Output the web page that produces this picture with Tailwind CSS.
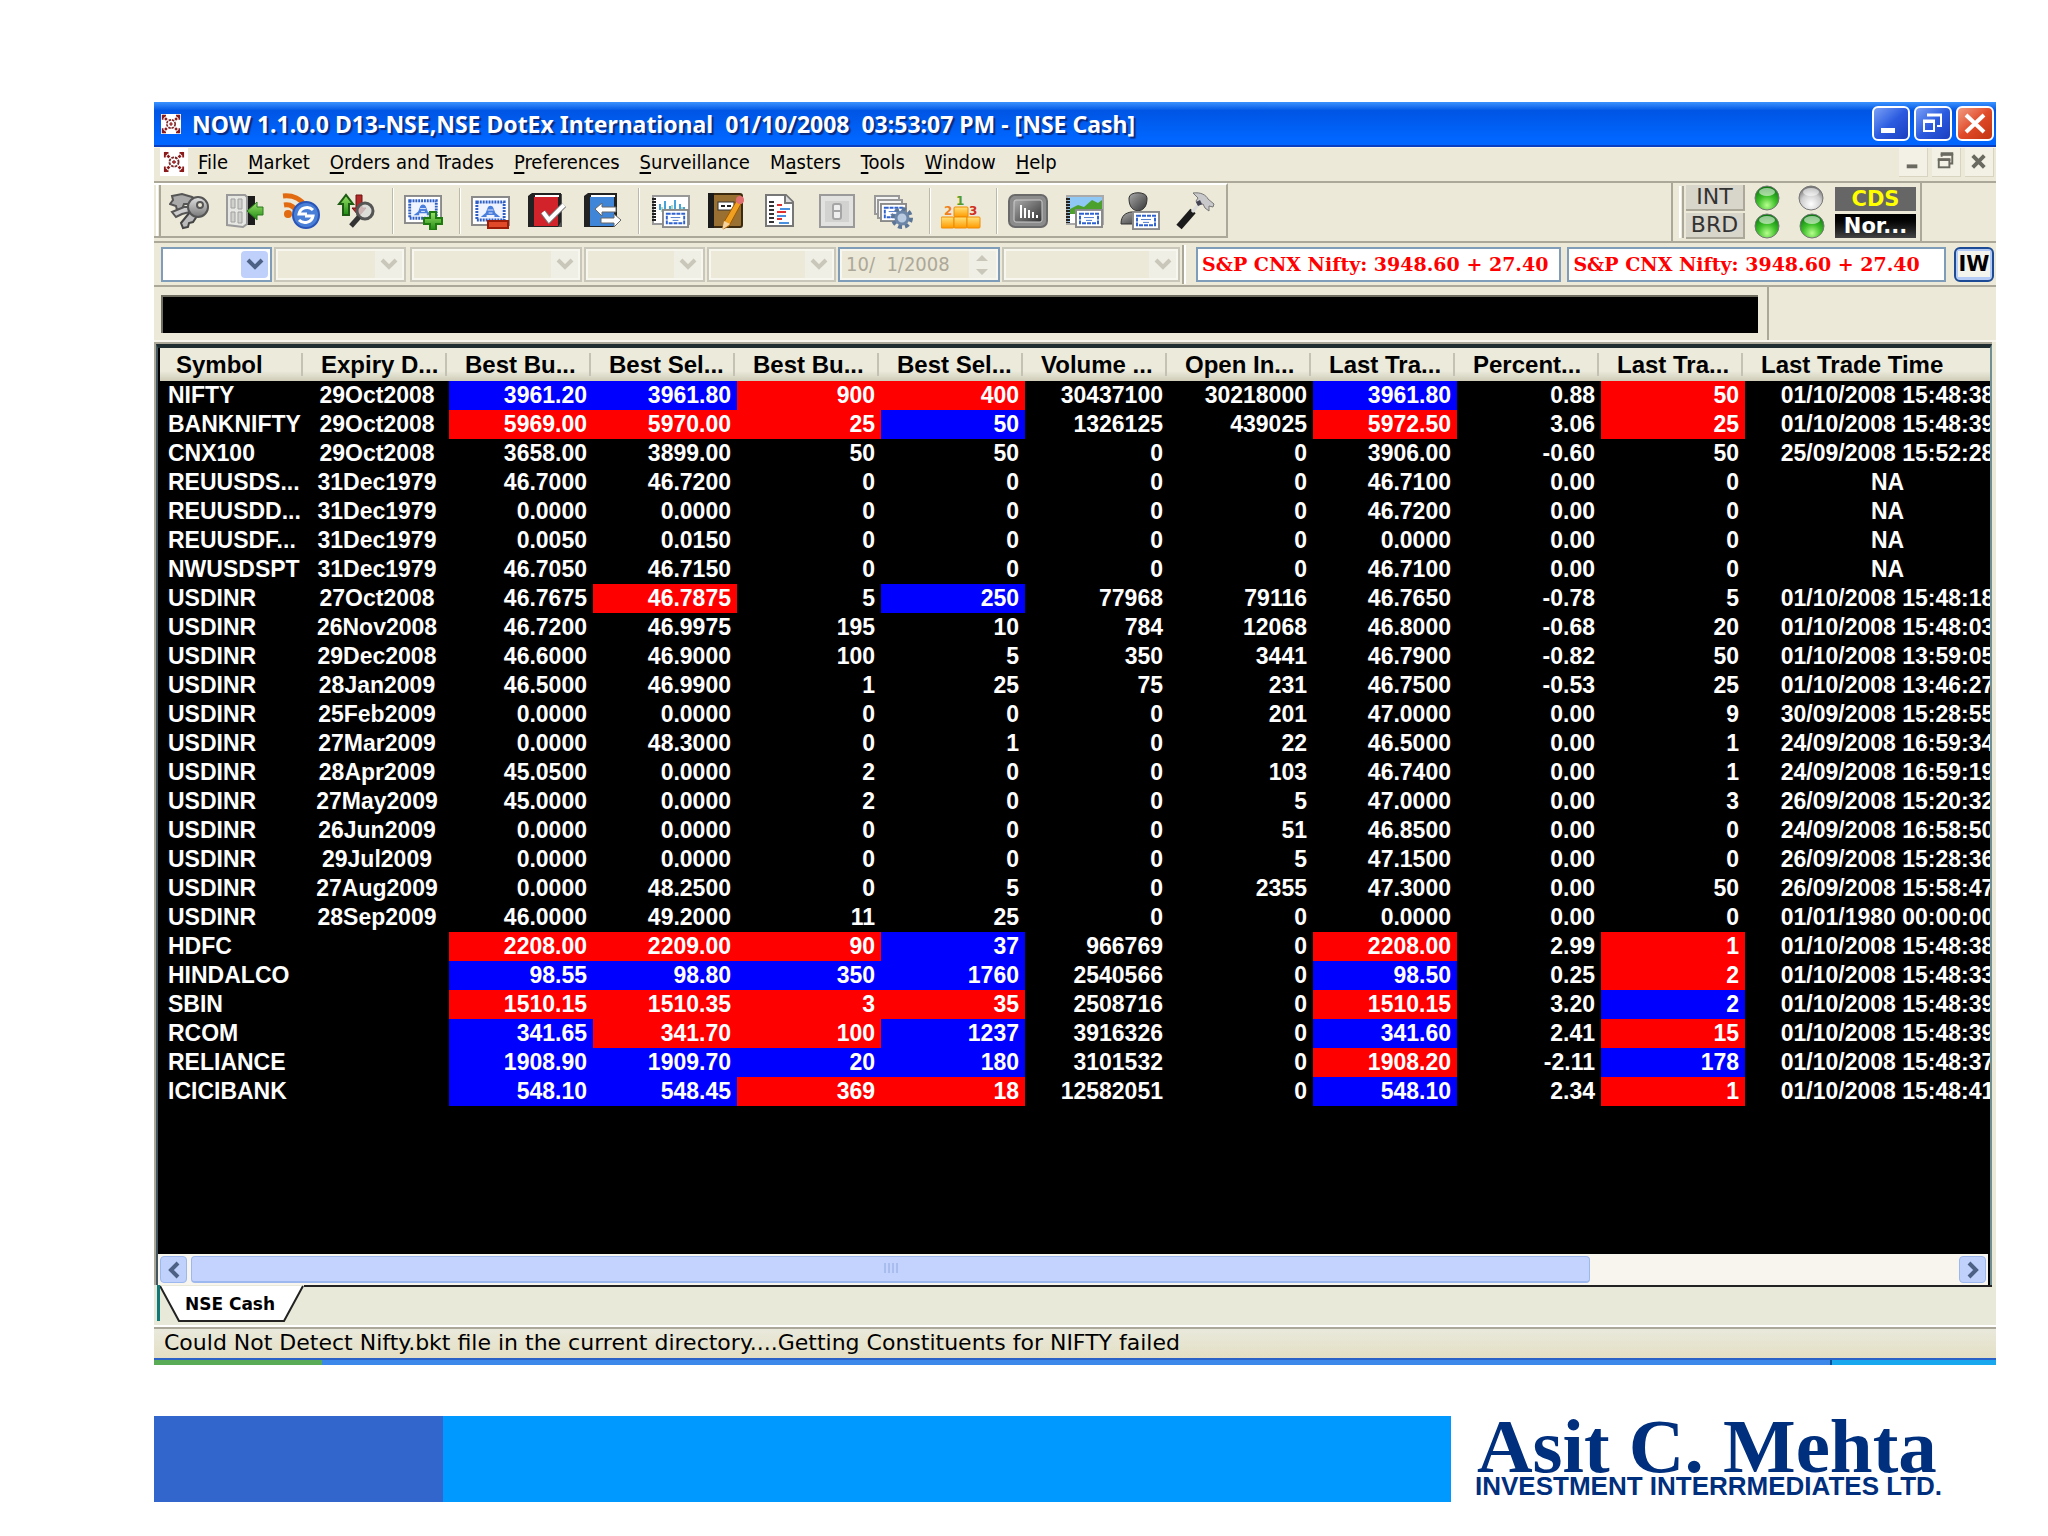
<!DOCTYPE html>
<html lang="en">

<head>
    <meta charset="UTF-8">
    <meta name="viewport" content="width=device-width, initial-scale=1.0">
    <title>NOW 1.1.0.0 - NSE Cash</title>
    <script src="https://cdn.jsdelivr.net/npm/@tailwindcss/browser@4"></script>
</head>

<body class="bg-white min-h-screen">
    <!-- shared icon parts -->
    <svg class="absolute w-0 h-0">
        <defs>
            <linearGradient id="gOrange" x1="0" y1="0" x2="0" y2="1"><stop offset="0" stop-color="#ffe27a"/><stop offset="1" stop-color="#ff9a00"/></linearGradient>
            <linearGradient id="gGreen" x1="0" y1="0" x2="0" y2="1"><stop offset="0" stop-color="#9be36a"/><stop offset="1" stop-color="#1f8a12"/></linearGradient>
            <linearGradient id="gGray" x1="0" y1="0" x2="0" y2="1"><stop offset="0" stop-color="#e4e4e4"/><stop offset="1" stop-color="#777"/></linearGradient>
            <linearGradient id="gDark" x1="0" y1="0" x2="1" y2="1"><stop offset="0" stop-color="#aaa"/><stop offset="1" stop-color="#333"/></linearGradient>
            <radialGradient id="ledGreen" cx=".5" cy=".8" r=".75"><stop offset="0" stop-color="#b6ff8e"/><stop offset=".5" stop-color="#3fc02a"/><stop offset="1" stop-color="#0c7a10"/></radialGradient>
            <radialGradient id="ledGray" cx=".5" cy=".75" r=".7"><stop offset="0" stop-color="#fff"/><stop offset=".6" stop-color="#cfcfcf"/><stop offset="1" stop-color="#777"/></radialGradient>
            <symbol id="cert" viewBox="0 0 40 30" preserveAspectRatio="none">
                <rect x="1" y="1" width="38" height="28" fill="#fff" stroke="#8a8a8a" stroke-width="2"/>
                <rect x="6" y="6" width="28" height="18" fill="#eef3ff" stroke="#2f5fc4" stroke-width="3" stroke-dasharray="2 1"/>
                <path d="M10 21l5-4 2-5c1-3 5-3 6 0l2 5 5 4h-6v-2h-8v2z" fill="#4a7edc"/>
                <path d="M17 14h6M18 17h4" stroke="#dfe9ff" stroke-width="1"/>
            </symbol>
            <symbol id="certSmall" viewBox="0 0 28 20" preserveAspectRatio="none">
                <rect x="1" y="1" width="26" height="18" fill="#fff" stroke="#8a8a8a" stroke-width="2"/>
                <rect x="5" y="5" width="18" height="10" fill="none" stroke="#2f62cf" stroke-width="2" stroke-dasharray="4 1"/>
                <path d="M9 9h10M11 12h6" stroke="#4a78c8" stroke-width="1"/>
            </symbol>
            <symbol id="chev" viewBox="0 0 18 12"><path d="M2 2l7 7 7-7" fill="none" stroke="currentColor" stroke-width="4"/></symbol>
            <symbol id="appIcon" viewBox="0 0 24 24">
                <rect width="24" height="24" fill="#fff"/>
                <path d="M2 2l5 5M22 2l-5 5M2 22l5-5M22 22l-5-5" stroke="#8b1a1a" stroke-width="3" stroke-dasharray="3 1"/>
                <path d="M2 7V2h4M18 2h4v5M2 17v5h4M18 22h4v-5" fill="none" stroke="#8b1a1a" stroke-width="2"/>
                <circle cx="12" cy="12" r="5" fill="none" stroke="#7a2a2a" stroke-width="2" stroke-dasharray="3 1"/>
                <path d="M10 12h4M12 10v4" stroke="#a03030" stroke-width="2"/>
            </symbol>
        </defs>
    </svg>

    <main class="mt-[102px] ml-[154px] mr-[52px] bg-[#ece9d8]">
        <!-- title bar -->
        <header class="flex items-center h-[45px] pl-1.5 pr-0.5 bg-linear-to-b from-[#3b93ff] from-0% via-[#0055e4] via-20% to-[#0066ff] to-85% border-b-2 border-[#0a3fc0]">
            <svg class="w-[22px] h-[20px]"><use href="#appIcon"/></svg>
            <h1 class="flex-1 pl-2.5 font-['Noto_Sans',sans-serif] font-bold text-[23px] leading-8 text-white whitespace-pre [text-shadow:2px_2px_1px_#0a2a80]">NOW 1.1.0.0 D13-NSE,NSE DotEx International  01/10/2008  03:53:07 PM - [NSE Cash]</h1>
            <div class="flex gap-1">
                <button aria-label="Minimize" class="w-[38px] h-[35px] rounded-md border-2 border-white bg-linear-to-br from-[#7b9ff5] via-[#2c5be0] to-[#1c3fc0]">
                    <svg class="w-full h-full" viewBox="0 0 34 31"><rect x="7" y="20" width="14" height="5" fill="#fff"/></svg>
                </button>
                <button aria-label="Restore" class="w-[38px] h-[35px] rounded-md border-2 border-white bg-linear-to-br from-[#7b9ff5] via-[#2c5be0] to-[#1c3fc0]">
                    <svg class="w-full h-full" viewBox="0 0 34 31" fill="none" stroke="#fff"><path d="M12 8V7h13v11h-4" stroke-width="2"/><path d="M11 7h15" stroke-width="3"/><rect x="8" y="14" width="10" height="9" stroke-width="2"/><path d="M7 13h12" stroke-width="3"/></svg>
                </button>
                <button aria-label="Close" class="w-[38px] h-[35px] rounded-md border-2 border-white bg-linear-to-br from-[#f09a80] via-[#e04a28] to-[#c23410]">
                    <svg class="w-full h-full" viewBox="0 0 34 31"><path d="M8 7l18 17M26 7L8 24" stroke="#fff" stroke-width="4"/></svg>
                </button>
            </div>
        </header>

        <!-- menu bar -->
        <nav class="flex items-start h-[34px] pl-1.5 pr-0.5 bg-[#ece9d8] border-t border-[#f8f6ec] font-['DejaVu_Sans_Condensed','DejaVu_Sans',sans-serif] [font-stretch:condensed] text-[20px] leading-7 text-black">
            <span class="flex w-7 h-7 items-center justify-center bg-white"><svg class="w-[22px] h-[22px]"><use href="#appIcon"/></svg></span>
            <div class="flex gap-5 flex-1 pl-2.5 underline-offset-3">
                <a href="#"><u>F</u>ile</a>
                <a href="#"><u>M</u>arket</a>
                <a href="#"><u>O</u>rders and Trades</a>
                <a href="#"><u>P</u>references</a>
                <a href="#"><u>S</u>urveillance</a>
                <a href="#">M<u>a</u>sters</a>
                <a href="#"><u>T</u>ools</a>
                <a href="#"><u>W</u>indow</a>
                <a href="#"><u>H</u>elp</a>
            </div>
            <div class="flex gap-1">
                <button aria-label="Minimize document" class="w-[29px] h-[29px] bg-[#f3f1e6] border-r border-b border-[#d8d4c0]"><svg class="w-full h-full" viewBox="0 0 29 29"><rect x="8" y="17" width="11" height="4" fill="#6b6a60"/></svg></button>
                <button aria-label="Restore document" class="w-[29px] h-[29px] bg-[#f3f1e6] border-r border-b border-[#d8d4c0]"><svg class="w-full h-full" viewBox="0 0 29 29" fill="none" stroke="#6b6a60" stroke-width="2"><path d="M10 9V7h11v9h-3"/><path d="M9 6h13M6 12h13" stroke-width="3"/><rect x="7" y="12" width="11" height="8"/></svg></button>
                <button aria-label="Close document" class="w-[29px] h-[29px] bg-[#f3f1e6] border-r border-b border-[#d8d4c0]"><svg class="w-full h-full" viewBox="0 0 29 29"><path d="M8 8l12 12M20 8L8 20" stroke="#6b6a60" stroke-width="4"/></svg></button>
            </div>
        </nav>

        <!-- icon toolbar -->
        <section class="flex h-[62px] border-y-2 border-[#aca899] bg-[#ece9d8]">
            <div class="flex items-center h-[55px] w-[1074px] pl-0.5 border-t-2 border-white border-r-2 border-b-2 border-r-[#aca899] border-b-[#aca899]">
                <span class="w-[5px] h-full border-x-2 border-l-white border-r-[#aca899]"></span>
                <button aria-label="Login" class="w-14 px-2"><svg class="w-10 h-[38px]" viewBox="0 0 40 38"><path d="M3 4l10-2 10 3 5 3-5 4-8 0-2 5-5 1-1-4-6-2 3-4z" fill="#aaa" stroke="#555" stroke-width="2"/><path d="M3 20l12-5 9 0-3 5-8 2-6 3z" fill="#ccc" stroke="#555" stroke-width="2"/><path d="M21 20l-9 11 2 5 5-1 1-4 4-1 4-6z" fill="#bbb" stroke="#444" stroke-width="2"/><circle cx="29" cy="15" r="10" fill="url(#gGray)" stroke="#555" stroke-width="2"/><circle cx="31" cy="13" r="3" fill="#ece9d8" stroke="#555" stroke-width="2"/></svg></button>
                <button aria-label="Logout" class="w-14 px-2"><svg class="w-10 h-[38px]" viewBox="0 0 40 38"><rect x="19" y="4" width="11" height="29" fill="#1c1c1c"/><path d="M2 3h18l2 2v27l-4 3-16-2z" fill="#e6e6e2" stroke="#9a9a9a" stroke-width="2"/><path d="M6 7h4v9H6zM13 7h4v10h-4zM6 20h4v10H6zM13 20h4v11h-4z" fill="#d0d0cc" stroke="#a0a0a0"/><path d="M38 15h-6v-5L22 19l10 9v-5h6z" fill="url(#gGreen)" stroke="#2b7a1e" stroke-width="1"/></svg></button>
                <button aria-label="Feed" class="w-14 px-2"><svg class="w-10 h-[38px]" viewBox="0 0 40 38" fill="none"><path d="M2 4c10-1 18 3 22 10" stroke="#e26a10" stroke-width="5"/><path d="M3 13c6-1 10 1 13 7" stroke="#e26a10" stroke-width="5"/><circle cx="7" cy="22" r="4" fill="#e26a10"/><circle cx="25" cy="23" r="13" fill="#4a7fd8" stroke="#2a55b8" stroke-width="2"/><path d="M32 18c-5-5-13-2-14 4h8M18 28c5 5 13 2 14-4h-8" stroke="#fff" stroke-width="3"/></svg></button>
                <button aria-label="Market watch search" class="w-14 px-2"><svg class="w-10 h-[38px]" viewBox="0 0 40 38"><path d="M6 23V12H2L9 3l7 9h-4v11z" fill="url(#gGreen)" stroke="#1d5c12" stroke-width="2"/><path d="M19 3h6v13h4l-7 8-7-8h4z" fill="#b02a2a" stroke="#701010" stroke-width="1"/><circle cx="28" cy="19" r="8" fill="#d8d8d8" fill-opacity=".8" stroke="#555" stroke-width="3"/><path d="M22 25l-8 9" stroke="#333" stroke-width="5"/></svg></button>
                <span class="w-[2px] h-[46px] ml-[7px] mr-[2px] bg-[#bdb9a8] border-r border-white"></span>
                <button aria-label="Add order" class="w-14 px-2"><svg class="w-10 h-[38px]" viewBox="0 0 40 38"><use href="#cert" x="0" y="3" width="38" height="29"/><path d="M26 20h6v6h6v6h-6v6h-6v-6h-6v-6h6z" fill="url(#gGreen)" stroke="#1f7a10" stroke-width="2"/></svg></button>
                <span class="w-[2px] h-[46px] ml-[7px] mr-[2px] bg-[#bdb9a8] border-r border-white"></span>
                <button aria-label="Remove order" class="w-14 px-2"><svg class="w-10 h-[38px]" viewBox="0 0 40 38"><use href="#cert" x="0" y="4" width="39" height="30"/><rect x="17" y="29" width="20" height="7" fill="#e04a28" stroke="#9c1c08" stroke-width="2"/></svg></button>
                <button aria-label="Order book" class="w-14 px-2"><svg class="w-10 h-[38px]" viewBox="0 0 40 38"><path d="M3 2h32v33H3z" fill="#555"/><path d="M1 4l4-3h29v29l-3 5H1z" fill="#222"/><rect x="7" y="5" width="24" height="29" fill="#d2232a"/><path d="M8 4h24" stroke="#fff" stroke-width="2"/><path d="M16 20l6 8 15-15" fill="none" stroke="#777" stroke-width="6"/><path d="M16 20l6 8 15-15" fill="none" stroke="#fff" stroke-width="4"/></svg></button>
                <button aria-label="Trade book" class="w-14 px-2"><svg class="w-10 h-[38px]" viewBox="0 0 40 38"><path d="M1 4l4-3h29v29l-3 5H1z" fill="#222"/><rect x="7" y="5" width="24" height="29" fill="#3f86d8"/><path d="M8 4h24" stroke="#fff" stroke-width="2"/><path d="M12 17l7-6v4h14v5H19v4zM38 28l-7-6v4H18v5h13v4z" fill="#fff" stroke="#666" stroke-width="1"/></svg></button>
                <span class="w-[2px] h-[46px] ml-[7px] mr-[2px] bg-[#bdb9a8] border-r border-white"></span>
                <button aria-label="Market picture" class="w-14 px-2"><svg class="w-10 h-[38px]" viewBox="0 0 40 38"><rect x="3" y="4" width="36" height="28" fill="#fff" stroke="#999" stroke-width="2"/><path d="M4 6v23" stroke="#222" stroke-width="4" stroke-dasharray="2 1"/><path d="M10 18v-6M15 18V9M20 18v-4M25 18V8M30 18v-6M34 18v-3" stroke="#4aa3d8" stroke-width="2"/><path d="M12 20v-5M22 20v-7M32 20v-5" stroke="#5bbf8a" stroke-width="1"/><use href="#certSmall" x="12" y="17" width="27" height="19"/></svg></button>
                <button aria-label="Edit notes" class="w-14 px-2"><svg class="w-10 h-[38px]" viewBox="0 0 40 38"><rect x="4" y="2" width="32" height="33" rx="2" fill="#9a6f32" stroke="#3c2a10" stroke-width="2"/><path d="M5 1v35" stroke="#1b1b1b" stroke-width="6"/><rect x="12" y="10" width="16" height="8" fill="#fff" stroke="#333"/><path d="M15 14h10" stroke="#222" stroke-width="2" stroke-dasharray="4 2"/><path d="M31 8l5 2-13 24-6 3 1-7z" fill="#f0a020" stroke="#a05a00" stroke-width="1"/><circle cx="34" cy="8" r="4" fill="#e07070"/><path d="M18 29l6 3-8 6z" fill="#f5d3a0"/></svg></button>
                <button aria-label="Report" class="w-14 px-2"><svg class="w-10 h-[38px]" viewBox="0 0 40 38"><path d="M4 3h20l7 7v24H4z" fill="#fff" stroke="#777" stroke-width="2"/><path d="M23 3v8h8" fill="#ddd" stroke="#777" stroke-width="2"/><path d="M7 10h5M7 14h5M7 18h5M7 22h5M7 26h5M7 30h5" stroke="#333" stroke-width="2"/><path d="M15 13h5M15 20h9M15 27h5" stroke="#e03030" stroke-width="2"/><path d="M18 17h10M15 24h9M17 31h10" stroke="#4a90e0" stroke-width="2"/></svg></button>
                <button aria-label="Switch" class="w-14 px-2"><svg class="w-10 h-[38px]" viewBox="0 0 40 38"><rect x="2" y="3" width="34" height="32" fill="#e2e2e0" stroke="#9a9a9a" stroke-width="2"/><rect x="7" y="9" width="24" height="21" fill="#d2d2d0"/><rect x="15" y="12" width="8" height="15" rx="2" fill="#eee" stroke="#a5a5a5" stroke-width="2"/><path d="M15 19h8" stroke="#a5a5a5" stroke-width="2"/></svg></button>
                <button aria-label="Order settings" class="w-14 px-2"><svg class="w-10 h-[38px]" viewBox="0 0 40 38"><path d="M1 4h24v18H1z" fill="#f4f4f4" stroke="#999" stroke-width="2"/><path d="M4 8h24v18H4z" fill="#f4f4f4" stroke="#999" stroke-width="2"/><use href="#certSmall" x="6" y="11" width="27" height="19"/><circle cx="28" cy="26" r="9" fill="none" stroke="#5c7698" stroke-width="4" stroke-dasharray="4 3"/><circle cx="28" cy="26" r="6" fill="#b9cbe0" stroke="#6c86a8" stroke-width="3"/></svg></button>
                <span class="w-[2px] h-[46px] ml-[7px] mr-[2px] bg-[#bdb9a8] border-r border-white"></span>
                <button aria-label="Rankings" class="w-14 px-2"><svg class="w-10 h-[38px]" viewBox="0 0 40 38"><g fill="url(#gOrange)" stroke="#f08a00" stroke-width="1"><rect x="13" y="15" width="14" height="10" rx="1"/><rect x="0" y="25" width="13" height="11" rx="1"/><rect x="13" y="25" width="13" height="11" rx="1"/><rect x="26" y="25" width="13" height="11" rx="1"/></g><g font-family="DejaVu Sans" font-weight="bold" font-size="12"><text x="15" y="13" fill="#5a9a20">1</text><text x="3" y="23" fill="#f08020">2</text><text x="28" y="23" fill="#d03020">3</text></g></svg></button>
                <span class="w-[2px] h-[46px] ml-[7px] mr-[2px] bg-[#bdb9a8] border-r border-white"></span>
                <button aria-label="Index graph" class="w-14 px-2"><svg class="w-10 h-[38px]" viewBox="0 0 40 38"><rect x="1" y="3" width="38" height="32" rx="6" fill="#8c8c8c" stroke="#6a6a6a" stroke-width="2"/><rect x="6" y="8" width="28" height="22" rx="2" fill="url(#gDark)" stroke="#ccc" stroke-width="1"/><path d="M13 26V13M17 26V16M21 26V18M25 26v-6M29 26v-3" stroke="#fff" stroke-width="2"/></svg></button>
                <button aria-label="Chart" class="w-14 px-2"><svg class="w-10 h-[38px]" viewBox="0 0 40 38"><rect x="3" y="4" width="36" height="28" fill="#8fc8f5" stroke="#aaa" stroke-width="2"/><path d="M6 17l8-4 6 2 8-7 6 3 4-3v14H6z" fill="#4ca02c"/><path d="M6 22h12v9H6z" fill="#fff"/><path d="M4 6v25" stroke="#222" stroke-width="4" stroke-dasharray="2 1"/><use href="#certSmall" x="11" y="17" width="28" height="19"/></svg></button>
                <button aria-label="Client orders" class="w-14 px-2"><svg class="w-10 h-[38px]" viewBox="0 0 40 38"><path d="M1 32c0-9 5-11 10-12h14v12z" fill="url(#gDark)" stroke="#333"/><path d="M9 6c0-7 18-7 18 0 0 5-1 12-9 13-8-1-9-8-9-13z" fill="url(#gDark)" stroke="#333"/><use href="#certSmall" x="12" y="19" width="28" height="19"/></svg></button>
                <button aria-label="Tools" class="w-14 px-2"><svg class="w-10 h-[38px]" viewBox="0 0 40 38"><path d="M3 35l14-16" stroke="#1b1b1b" stroke-width="7"/><path d="M16 20l8-9" stroke="#ddd" stroke-width="3"/><path d="M17 1c8-1 13 2 15 6l6 5-1 3-4-1 0 5-4-3-2-4-5 1-2-4 2-3z" fill="#c9c9cc" stroke="#777" stroke-width="1"/><path d="M20 10l4-2 2 4-4 2z" fill="#445"/></svg></button>
            </div>
            <div class="flex-1"></div>
            <div class="flex items-center w-[251px] border-x-2 border-x-[#aca899]">
                <span class="w-[5px] h-[52px] ml-1.5 border-x-2 border-l-white border-r-[#aca899]"></span>
                <div class="ml-0.5 flex flex-col gap-[2px] w-[59px] font-['DejaVu_Sans',sans-serif] text-[22px] leading-6 text-center text-[#333]">
                    <span class="h-[26px] bg-[#d8d5cb] border-r-2 border-b-2 border-[#aca899]">INT</span>
                    <span class="h-[26px] bg-[#d8d5cb] border-r-2 border-b-2 border-[#aca899]">BRD</span>
                </div>
                <svg class="w-[90px] h-[54px]" viewBox="0 0 90 54" stroke-width="1">
                    <g stroke="#777"><circle cx="22" cy="13" r="12" fill="url(#ledGreen)"/><circle cx="66" cy="13" r="12" fill="url(#ledGray)"/><circle cx="22" cy="41" r="12" fill="url(#ledGreen)"/><circle cx="67" cy="41" r="12" fill="url(#ledGreen)"/></g>
                    <g fill="#fff" fill-opacity=".55"><ellipse cx="22" cy="7" rx="8" ry="4"/><ellipse cx="66" cy="7" rx="8" ry="4"/><ellipse cx="22" cy="35" rx="8" ry="4"/><ellipse cx="67" cy="35" rx="8" ry="4"/></g>
                </svg>
                <div class="flex flex-col gap-[3px] w-[81px] font-['DejaVu_Sans',sans-serif] font-bold text-[21px] leading-6 text-center">
                    <span class="bg-[#666] text-[#ffff00]">CDS</span>
                    <span class="bg-linear-to-b from-black to-[#444] text-white">Nor...</span>
                </div>
            </div>
            <div class="w-[74px]"></div>
        </section>

        <!-- order filter bar -->
        <section class="flex items-center h-[44px] pl-[7px] pr-0.5 border-b-2 border-[#aca899] font-['DejaVu_Sans_Condensed','DejaVu_Sans',sans-serif]">
            <div class="flex h-[35px] w-[111px] p-[2px] border-2 border-[#7f9db9] bg-white">
                <select aria-label="Exchange" class="flex-1 min-w-0 appearance-none bg-white"></select>
                <span class="flex items-center justify-center w-[27px] bg-[#bfd0fb] rounded-sm text-[#4d6185]"><svg class="w-[18px] h-3"><use href="#chev"/></svg></span>
            </div>
            <div class="flex h-[35px] w-[132px] ml-0.5 p-[2px] border-2 border-[#c9c7ba] bg-[#f7f6ef]">
                <select aria-label="Instrument" disabled class="flex-1 min-w-0 appearance-none bg-[#ece9d8]"></select>
                <span class="flex items-center justify-center w-[27px] bg-[#f0efe6] text-[#c9c7ba]"><svg class="w-[18px] h-3"><use href="#chev"/></svg></span>
            </div>
            <div class="flex h-[35px] w-[172px] ml-1 p-[2px] border-2 border-[#c9c7ba] bg-[#f7f6ef]">
                <select aria-label="Symbol" disabled class="flex-1 min-w-0 appearance-none bg-[#ece9d8]"></select>
                <span class="flex items-center justify-center w-[27px] bg-[#f0efe6] text-[#c9c7ba]"><svg class="w-[18px] h-3"><use href="#chev"/></svg></span>
            </div>
            <div class="flex h-[35px] w-[121px] ml-0.5 p-[2px] border-2 border-[#c9c7ba] bg-[#f7f6ef]">
                <select aria-label="Series" disabled class="flex-1 min-w-0 appearance-none bg-[#ece9d8]"></select>
                <span class="flex items-center justify-center w-[27px] bg-[#f0efe6] text-[#c9c7ba]"><svg class="w-[18px] h-3"><use href="#chev"/></svg></span>
            </div>
            <div class="flex h-[35px] w-[129px] ml-0.5 p-[2px] border-2 border-[#c9c7ba] bg-[#f7f6ef]">
                <select aria-label="Option type" disabled class="flex-1 min-w-0 appearance-none bg-[#ece9d8]"></select>
                <span class="flex items-center justify-center w-[27px] bg-[#f0efe6] text-[#c9c7ba]"><svg class="w-[18px] h-3"><use href="#chev"/></svg></span>
            </div>
            <div class="flex h-[35px] w-[162px] ml-0.5 p-[2px] border-2 border-[#7f9db9] bg-[#f7f6ef]">
                <input aria-label="Expiry date" type="text" disabled value="10/  1/2008" class="flex-1 min-w-0 pl-1 whitespace-pre bg-[#ece9d8] text-[20px] [font-stretch:condensed] text-[#aca899]">
                <svg class="w-[27px] h-full bg-[#f0efe6]" viewBox="0 0 27 27" fill="#c9c7ba"><path d="M7 10l6-6 6 6zM7 18l6 6 6-6z"/></svg>
            </div>
            <div class="flex h-[35px] w-[178px] ml-0.5 p-[2px] border-2 border-[#c9c7ba] bg-[#f7f6ef]">
                <select aria-label="Strike price" disabled class="flex-1 min-w-0 appearance-none bg-[#ece9d8]"></select>
                <span class="flex items-center justify-center w-[27px] bg-[#f0efe6] text-[#c9c7ba]"><svg class="w-[18px] h-3"><use href="#chev"/></svg></span>
            </div>
            <span class="w-1 h-[39px] mx-0.5 border-l-2 border-r-2 border-l-[#aca899] border-r-white"></span>
            <div class="flex flex-1 gap-1.5 ml-2 mr-2 font-['DejaVu_Serif',serif] font-bold text-[19px] leading-[30px] text-[#ff0000]">
                <p class="flex-[27] h-[35px] pl-1 bg-white border-2 border-[#7f9db9] whitespace-nowrap">S&amp;P CNX Nifty: 3948.60 + 27.40</p>
                <p class="flex-[28] h-[35px] pl-1 bg-white border-2 border-[#7f9db9] whitespace-nowrap">S&amp;P CNX Nifty: 3948.60 + 27.40</p>
            </div>
            <button class="w-10 h-[35px] rounded-md border-2 border-[#1c4a94] bg-[#b4ccf5] p-0.5 font-['DejaVu_Sans',sans-serif] font-bold text-[21px] leading-[26px] text-black"><span class="flex justify-center bg-[#f4f4ee]">IW</span></button>
        </section>

        <!-- message bar -->
        <section class="flex h-[55px] border-b-2 border-[#f8f6ec]">
            <div class="flex-1 mt-2 mb-[7px] ml-[7px] mr-[9px] bg-black border-t-2 border-l-2 border-[#6f6e60]"></div>
            <div class="w-[229px] border-l-2 border-[#aca899]"></div>
        </section>

        <!-- market watch grid -->
        <section class="mr-[4px] border-t-2 border-l-2 border-[#aca899]">
            <div class="border-t-4 border-x-2 border-t-[#1f2c30] border-l-[#44565f] border-r-[#6f8f93] bg-black">
                <div class="overflow-hidden pb-[148px] ml-[2px]">
                    <table class="table-fixed w-[1870px] border-collapse font-['Liberation_Sans',Arial,sans-serif] font-bold text-[23px] leading-[29px] text-white whitespace-nowrap">
                        <thead><tr id="head"></tr></thead>
                        <tbody id="rows"></tbody>
                    </table>
                </div>
                <div class="flex h-[31px] mr-0.5 p-[2px] gap-1 bg-[#f7f5ee]">
                    <button aria-label="Scroll left" class="flex items-center justify-center w-[27px] rounded-sm bg-[#c0d1fc] border border-[#9db8ee] text-[#4d6185]"><svg class="w-[18px] h-3 rotate-90"><use href="#chev"/></svg></button>
                    <div class="flex flex-1">
                        <div class="flex flex-[23] items-center justify-center rounded-sm bg-[#c3d3fd] border border-b-2 border-[#9db8ee]">
                            <svg class="w-4 h-3"><path d="M2 0v10M6 0v10M10 0v10M14 0v10" stroke="#8ea8e0" stroke-width="1"/></svg>
                        </div>
                        <div class="flex-[6]"></div>
                    </div>
                    <button aria-label="Scroll right" class="flex items-center justify-center w-[27px] rounded-sm bg-[#c0d1fc] border border-[#9db8ee] text-[#4d6185]"><svg class="w-[18px] h-3 -rotate-90"><use href="#chev"/></svg></button>
                </div>
            </div>
        </section>

        <!-- sheet tabs -->
        <section class="flex h-[42px] bg-[#e9e9d9] border-b-2 border-white">
            <span class="w-[3px] ml-[3px] mb-1 bg-[#117a78]"></span>
            <button class="relative w-[144px] h-[37px] pr-1 font-['DejaVu_Sans',sans-serif] font-bold text-[17px] leading-9 text-black">
                <svg class="absolute inset-0 w-full h-full" viewBox="0 0 144 37"><path d="M0 1l19 35h105l19-35" fill="#fff" stroke="#222" stroke-width="2"/></svg>
                <span class="relative">NSE Cash</span>
            </button>
            <span class="flex-1 mr-1 border-t-2 border-[#222]"></span>
        </section>

        <!-- status bar -->
        <footer class="h-[31px] pl-2.5 border-t-2 border-[#aca899] bg-linear-to-b from-[#e9e9dc] to-[#e4dfc4] font-['DejaVu_Sans',sans-serif] text-[22px] leading-7 text-black whitespace-nowrap">Could Not Detect Nifty.bkt file in the current directory....Getting Constituents for NIFTY failed</footer>
        <div class="flex h-[7px] bg-[#3c87ea] border-t-2 border-[#2a62c8]">
            <span class="w-[168px] bg-[#5aab55]"></span>
            <span class="flex-1"></span>
            <span class="w-[166px] bg-[#19a8ee] border-l-2 border-[#0d4f96]"></span>
        </div>
    </main>

    <!-- company band -->
    <div class="flex mt-[51px] ml-[154px] mr-[52px] h-[86px]">
        <div class="w-[289px] bg-[#3366cc]"></div>
        <div class="flex-1 bg-[#0099ff]"></div>
        <div class="w-[545px] pl-6 text-[#002f7d] whitespace-nowrap">
            <p class="h-[60px] pl-0.5 font-['Liberation_Serif',serif] font-bold text-[77px] leading-[60px]">Asit C. Mehta</p>
            <p class="font-['Liberation_Sans',sans-serif] font-bold text-[26px] leading-5">INVESTMENT INTERRMEDIATES LTD.</p>
        </div>
    </div>

    <script>
        const heads = ['Symbol', 'Expiry D...', 'Best Bu...', 'Best Sel...', 'Best Bu...', 'Best Sel...', 'Volume ...', 'Open In...', 'Last Tra...', 'Percent...', 'Last Tra...', 'Last Trade Time'];

        // one row per line, cells split by "|"; a leading + is an up tick (blue), a leading ! a down tick (red)
        const data = `NIFTY|29Oct2008|+3961.20|+3961.80|!900|!400|30437100|30218000|+3961.80|0.88|!50|01/10/2008 15:48:38
BANKNIFTY|29Oct2008|!5969.00|!5970.00|!25|+50|1326125|439025|!5972.50|3.06|!25|01/10/2008 15:48:39
CNX100|29Oct2008|3658.00|3899.00|50|50|0|0|3906.00|-0.60|50|25/09/2008 15:52:28
REUUSDS...|31Dec1979|46.7000|46.7200|0|0|0|0|46.7100|0.00|0|NA
REUUSDD...|31Dec1979|0.0000|0.0000|0|0|0|0|46.7200|0.00|0|NA
REUUSDF...|31Dec1979|0.0050|0.0150|0|0|0|0|0.0000|0.00|0|NA
NWUSDSPT|31Dec1979|46.7050|46.7150|0|0|0|0|46.7100|0.00|0|NA
USDINR|27Oct2008|46.7675|!46.7875|5|+250|77968|79116|46.7650|-0.78|5|01/10/2008 15:48:18
USDINR|26Nov2008|46.7200|46.9975|195|10|784|12068|46.8000|-0.68|20|01/10/2008 15:48:03
USDINR|29Dec2008|46.6000|46.9000|100|5|350|3441|46.7900|-0.82|50|01/10/2008 13:59:05
USDINR|28Jan2009|46.5000|46.9900|1|25|75|231|46.7500|-0.53|25|01/10/2008 13:46:27
USDINR|25Feb2009|0.0000|0.0000|0|0|0|201|47.0000|0.00|9|30/09/2008 15:28:55
USDINR|27Mar2009|0.0000|48.3000|0|1|0|22|46.5000|0.00|1|24/09/2008 16:59:34
USDINR|28Apr2009|45.0500|0.0000|2|0|0|103|46.7400|0.00|1|24/09/2008 16:59:19
USDINR|27May2009|45.0000|0.0000|2|0|0|5|47.0000|0.00|3|26/09/2008 15:20:32
USDINR|26Jun2009|0.0000|0.0000|0|0|0|51|46.8500|0.00|0|24/09/2008 16:58:50
USDINR|29Jul2009|0.0000|0.0000|0|0|0|5|47.1500|0.00|0|26/09/2008 15:28:36
USDINR|27Aug2009|0.0000|48.2500|0|5|0|2355|47.3000|0.00|50|26/09/2008 15:58:47
USDINR|28Sep2009|46.0000|49.2000|11|25|0|0|0.0000|0.00|0|01/01/1980 00:00:00
HDFC||!2208.00|!2209.00|!90|+37|966769|0|!2208.00|2.99|!1|01/10/2008 15:48:38
HINDALCO||+98.55|+98.80|+350|+1760|2540566|0|+98.50|0.25|!2|01/10/2008 15:48:33
SBIN||!1510.15|!1510.35|!3|!35|2508716|0|!1510.15|3.20|+2|01/10/2008 15:48:39
RCOM||+341.65|!341.70|!100|+1237|3916326|0|+341.60|2.41|!15|01/10/2008 15:48:39
RELIANCE||+1908.90|+1909.70|+20|+180|3101532|0|!1908.20|-2.11|+178|01/10/2008 15:48:37
ICICIBANK||+548.10|+548.45|!369|!18|12582051|0|+548.10|2.34|!1|01/10/2008 15:48:41`;

        document.getElementById('head').innerHTML = heads.map((h, i) => {
            const width = i == 0 ? 'w-[145px]' : i == 11 ? 'w-[285px]' : 'w-[144px]';
            const line = i == 11 ? '' : 'border-r-2 border-[#c4c2b2]';
            return `<th class="${width} h-[33px] p-0 bg-linear-to-b from-[#ebeadb] from-70% to-[#cfccb8] text-left font-bold text-[24px] text-black"><span class="block h-[23px] mr-[2px] pl-4 leading-6 ${line}">${h}</span></th>`;
        }).join('');

        document.getElementById('rows').innerHTML = data.split('\n').map(row => {
            const cells = row.split('|').map((cell, i) => {
                let bg = '';
                if (cell[0] == '+') bg = 'bg-[#0000ff]';
                if (cell[0] == '!') bg = 'bg-[#ff0000]';
                const align = i == 0 ? 'text-left pl-2' : i == 1 || i == 11 ? 'text-center' : 'text-right pr-1.5';
                return `<td class="h-[29px] py-0 ${align} ${bg}">${cell.replace(/^[+!]/, '')}</td>`;
            });
            return `<tr>${cells.join('')}</tr>`;
        }).join('');
    </script>
</body>

</html>
